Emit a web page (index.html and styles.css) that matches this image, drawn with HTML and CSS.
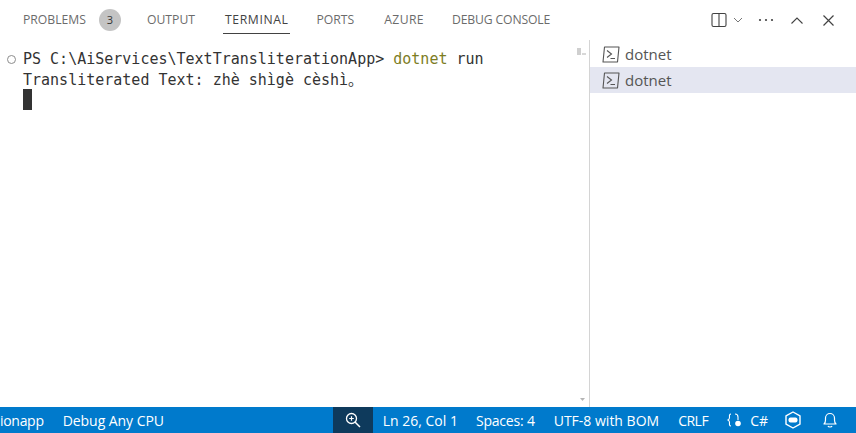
FILE: index.html
```html
<!DOCTYPE html>
<html lang="en">
<head>
<meta charset="utf-8">
<title>Terminal</title>
<link rel="stylesheet" href="styles.css">
</head>
<body>
<div class="app">
  <header class="tabbar">
    <nav class="tabs">
      <span class="tab problems">PROBLEMS</span>
      <span class="badge">3</span>
      <span class="tab">OUTPUT</span>
      <span class="tab active">TERMINAL</span>
      <span class="tab">PORTS</span>
      <span class="tab azure">AZURE</span>
      <span class="tab debug">DEBUG CONSOLE</span>
    </nav>
    <div class="actions">
      <svg class="ic split" width="16" height="16" viewBox="0 0 16 16"><rect x="1" y="1.5" width="14" height="13" rx="1.5" fill="none" stroke="#424242" stroke-width="1.1"/><path d="M8 1.5v13" stroke="#424242" stroke-width="1.1"/></svg>
      <svg class="ic chev" width="10" height="6" viewBox="0 0 10 6"><path d="M1 1l4 4 4-4" fill="none" stroke="#777" stroke-width="1"/></svg>
      <svg class="ic more" width="16" height="4" viewBox="0 0 16 4"><circle cx="2" cy="2" r="1.1" fill="#424242"/><circle cx="8" cy="2" r="1.1" fill="#424242"/><circle cx="14" cy="2" r="1.1" fill="#424242"/></svg>
      <svg class="ic up" width="12" height="7" viewBox="0 0 12 7"><path d="M.5 6.500L6 1l5.500 5.500" fill="none" stroke="#424242" stroke-width="1.1"/></svg>
      <svg class="ic close" width="11" height="11" viewBox="0 0 11 11"><path d="M.5.500l10 10M10.500.500l-10 10" fill="none" stroke="#424242" stroke-width="1.2"/></svg>
    </div>
  </header>
  <main class="panel">
    <section class="terminal">
      <div class="line"><span class="deco"></span>PS C:\AiServices\TextTransliterationApp&gt; <span class="cmd">dotnet</span> run</div>
      <div class="line">Transliterated Text: zhè shìgè cèshì。</div>
      <div class="cursor"></div>
      <div class="overview"></div>
      <svg class="scroll-down" width="5" height="3" viewBox="0 0 5 3"><path d="M0 0h5L2.500 3z" fill="#b5b5b5"/></svg>
    </section>
    <aside class="list">
      <div class="item">
        <svg width="18" height="17" viewBox="0 0 18 17"><path d="M2.500 1h14.500l-1.500 15H1z" fill="none" stroke="#555" stroke-width="1.100" stroke-linejoin="round"/><path d="M5 4.500l4.500 3.500-4.500 3.500M8.500 12.500h4.500" fill="none" stroke="#555" stroke-width="1.100"/></svg>
        <span>dotnet</span>
      </div>
      <div class="item selected">
        <svg width="18" height="17" viewBox="0 0 18 17"><path d="M2.500 1h14.500l-1.500 15H1z" fill="none" stroke="#555" stroke-width="1.100" stroke-linejoin="round"/><path d="M5 4.500l4.500 3.500-4.500 3.500M8.500 12.500h4.500" fill="none" stroke="#555" stroke-width="1.100"/></svg>
        <span>dotnet</span>
      </div>
    </aside>
  </main>
  <footer class="status">
    <div class="status-left">
      <span class="clip">ionapp</span>
      <span class="s-item">Debug Any CPU</span>
    </div>
    <div class="status-right">
      <span class="zoom-item"><svg width="18" height="18" viewBox="0 0 18 18"><circle cx="7.500" cy="7.500" r="5" fill="none" stroke="#fff" stroke-width="1.300"/><path d="M11 11l5 5" stroke="#fff" stroke-width="1.500"/><path d="M5.200 7.500h4.600M7.500 5.200v4.600" stroke="#fff" stroke-width="1.200"/></svg></span>
      <span class="s-item ln">Ln 26, Col 1</span>
      <span class="s-item sp">Spaces: 4</span>
      <span class="s-item enc">UTF-8 with BOM</span>
      <span class="s-item crlf">CRLF</span>
      <span class="s-item lang"><svg width="18" height="18" viewBox="0 0 18 18"><path d="M5 3C3 3 3.500 5 3.500 6.500S3 8.500 2 9c1 .5 1.500 1 1.500 2.500S3 15 5 15" fill="none" stroke="#fff" stroke-width="1.100"/><path d="M9 3c2 0 3 1 3 3v3" fill="none" stroke="#fff" stroke-width="1.100"/><circle cx="12" cy="12.500" r="2.800" fill="#fff"/></svg>C#</span>
      <span class="s-item cw"><svg width="18" height="18" viewBox="0 0 18 18"><path d="M9 1l7 3.800v8.400L9 17l-7-3.800V4.800z" fill="none" stroke="#fff" stroke-width="1.400" stroke-linejoin="round"/><rect x="4.500" y="6.500" width="9" height="5" rx="2" fill="#fff"/></svg></span>
      <span class="s-item bell"><svg width="16" height="18" viewBox="0 0 16 18"><path d="M2 13c1.200-1 1.500-2 1.500-4V7a4.500 4.500 0 0 1 9 0v2c0 2 .3 3 1.500 4z" fill="none" stroke="#fff" stroke-width="1.200" stroke-linejoin="round"/><path d="M6 15c.4 1.300 3.600 1.300 4 0" fill="none" stroke="#fff" stroke-width="1.200"/></svg></span>
    </div>
  </footer>
</div>
</body>
</html>
```
FILE: styles.css
```css
* { box-sizing: border-box; }
html, body { margin: 0; padding: 0; }
body { width: 856px; height: 433px; overflow: hidden; background: #fff; font-family: "Open Sans", "Noto Sans", sans-serif; }
.app { display: flex; flex-direction: column; height: 433px; }
.tabbar { height: 40px; display: flex; justify-content: space-between; align-items: center; flex: none; }
.tabs { display: flex; align-items: center; padding-left: 23px; height: 40px; }
.tab { font-size: 12.200px; color: #6b6b6b; line-height: 20px; white-space: nowrap; margin-right: 30px; position: relative; }
.tab.problems { margin-right: 13px; }
.tab.azure { letter-spacing: .4px; margin-right: 28px; }
.tab.debug { letter-spacing: -.15px; margin-right: 0; }
.tab.active { color: #424242; letter-spacing: .6px; margin-right: 28px; }
.tab.active::after { content: ""; position: absolute; left: -2px; right: -2px; top: 23px; height: 1px; background: #424242; }
.badge { width: 22px; height: 22px; border-radius: 50%; background: #c4c4c4; color: #333; font-size: 11px; text-align: center; line-height: 22px; margin-right: 26px; }
.actions { width: 150px; height: 40px; display: flex; align-items: center; padding-left: 5px; }
.ic { flex: none; }
.chev { margin-left: 6px; }
.more { margin-left: 15px; }
.up { margin-left: 17px; }
.close { margin-left: 20px; }
.panel { flex: 1; display: flex; min-height: 0; }
.terminal { width: 590px; position: relative; border-right: 1px solid #d4d4d4; padding: 9px 0 0 23px; font-family: "DejaVu Sans Mono", "Liberation Mono", "Noto Sans CJK SC", monospace; font-size: 15px; color: #333; }
.line { height: 21px; line-height: 21px; white-space: pre; position: relative; }
.cmd { color: #7d7d1f; }
.deco { position: absolute; left: -16px; top: 6px; width: 9px; height: 9px; border-radius: 50%; border: 1px solid #8c8c8c; }
.cursor { width: 9px; height: 21px; margin-top: -2px; background: #333; }
.overview { position: absolute; left: 577px; top: 8px; width: 9px; height: 7px; background: linear-gradient(#cfcfcf, #cfcfcf) 0 0 / 4px 7px no-repeat, linear-gradient(#d8d8d8, #d8d8d8) 5px 5px / 4px 2px no-repeat; }
.scroll-down { position: absolute; right: 4px; bottom: 6px; }
.list { width: 266px; flex: none; font-size: 15px; color: #555; padding-top: 1px; }
.item { height: 26px; display: flex; align-items: center; padding-left: 12px; gap: 5px; }
.item.selected { background: #e4e6f1; }
.status { height: 26px; flex: none; background: #007acc; color: #fff; font-size: 14px; display: flex; justify-content: space-between; align-items: center; }
.status-left { display: flex; align-items: center; white-space: nowrap; }
.clip { letter-spacing: -.3px; }
.status-left .s-item { margin-left: 19px; letter-spacing: -.05px; }
.status-right { display: flex; align-items: center; height: 26px; white-space: nowrap; }
.zoom-item { width: 40px; height: 26px; background: #0e3a5c; display: flex; align-items: center; justify-content: center; }
.s-item { display: inline-flex; align-items: center; }
.ln { margin-left: 10px; }
.sp { margin-left: 18px; letter-spacing: -.2px; }
.enc { margin-left: 19px; }
.crlf { margin-left: 19px; letter-spacing: -.5px; }
.lang { margin-left: 18px; gap: 6px; }
.cw { margin-left: 16px; }
.bell { margin-left: 20px; margin-right: 18px; }
```
